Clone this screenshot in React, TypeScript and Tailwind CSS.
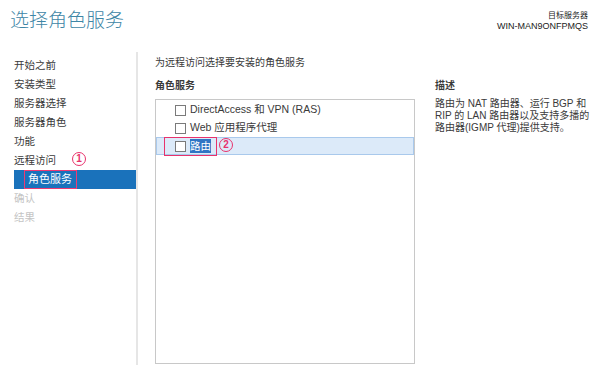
import React from "react";

const font = "font-['Liberation_Sans','Noto_Sans_CJK_SC',sans-serif]";

const steps = [
  { label: "开始之前" },
  { label: "安装类型" },
  { label: "服务器选择" },
  { label: "服务器角色" },
  { label: "功能" },
  { label: "远程访问" },
  { label: "角色服务", active: true },
  { label: "确认", disabled: true },
  { label: "结果", disabled: true },
];

function Circled({ n }: { n: string }) {
  return (
    <span className="absolute flex h-[14px] w-[14px] items-center justify-center rounded-full border border-[#e8326c] text-[10px] font-bold leading-none text-[#e8326c]">
      {n}
    </span>
  );
}

function Box() {
  return <span className="block h-[11px] w-[11px] border border-[#7a7a7a] bg-white" />;
}

export default function App() {
  return (
    <div className={`${font} relative h-[365px] w-[600px] overflow-hidden bg-white text-[10.5px] text-[#3a3a3a]`}>
      {/* header */}
      <div className="flex h-[52px] items-start justify-between px-[10px]">
        <h1 className="mt-[7px] text-[19px] font-light leading-[28px] text-[#3e86a6]">选择角色服务</h1>
        <div className="mt-[10px] mr-[2px] text-right text-[9px] leading-[11px] text-[#222]">
          <div className="text-[8px]">目标服务器</div>
          <div>WIN-MAN9ONFPMQS</div>
        </div>
      </div>

      <div className="flex h-[313px]">
        {/* nav */}
        <div className="relative w-[138px] border-r-2 border-[#e6e6e6] pt-[4px]">
          {steps.map((s) =>
            s.active ? (
              <div key={s.label} className="ml-[14px] flex h-[19px] items-center bg-[#1a72bb] pl-[14px] text-[11px] text-white">
                {s.label}
              </div>
            ) : (
              <div
                key={s.label}
                className={`flex h-[19px] items-center pl-[14px] ${s.disabled ? "text-[#c4c4c4]" : ""}`}
              >
                {s.label}
              </div>
            )
          )}
          <span className="absolute left-[24px] top-[118px] h-[19px] w-[53px] border border-[#ee3a74]" />
          <div className="absolute left-[72px] top-[100px]">
            <Circled n="1" />
          </div>
        </div>

        {/* content */}
        <div className="flex flex-1 pl-[17px]">
          <div className="flex w-[260px] flex-col">
            <div className="mt-[2px] h-[18px] text-[10px] leading-[18px]">为远程访问选择要安装的角色服务</div>
            <div className="mt-[5px] h-[18px] text-[10px] font-bold leading-[18px]">角色服务</div>
            <div className="relative mt-[4px] h-[265px] border border-[#c8c8c8] pt-[1px]">
              <div className="flex h-[18px] items-center gap-[4px] pl-[19px]">
                <Box />
                <span>DirectAccess 和 VPN (RAS)</span>
              </div>
              <div className="flex h-[18px] items-center gap-[4px] pl-[19px]">
                <Box />
                <span>Web 应用程序代理</span>
              </div>
              <div className="flex h-[18px] items-center gap-[4px] border border-[#a9c9ec] bg-[#dceaf9] pl-[18px]">
                <Box />
                <span className="bg-[#2f75c4] leading-[14px] text-white">路由</span>
              </div>
              <span className="absolute left-[8px] top-[37px] h-[19px] w-[53px] border border-[#e8326c]" />
              <div className="absolute left-[63px] top-[38px]">
                <Circled n="2" />
              </div>
            </div>
          </div>

          <div className="ml-[20px] w-[160px] text-[10px]">
            <div className="mt-[25px] h-[18px] font-bold leading-[18px]">描述</div>
            <p className="mt-[3px] leading-[12px]">
              路由为 NAT 路由器、运行 BGP 和<br />
              RIP 的 LAN 路由器以及支持多播的<br />
              路由器(IGMP 代理)提供支持。
            </p>
          </div>
        </div>
      </div>
    </div>
  );
}
